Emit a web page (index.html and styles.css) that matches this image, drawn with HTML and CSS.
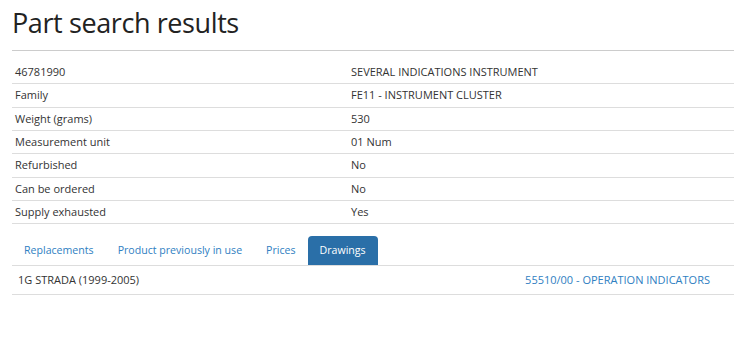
FILE: index.html
```html
<!DOCTYPE html>
<html lang="en">
<head>
  <meta charset="UTF-8">
  <meta name="viewport" content="width=device-width, initial-scale=1.0">
  <title>Part search results</title>
  <link rel="stylesheet" href="styles.css">
</head>
<body>
<div class="page">
  <h1 class="page-title">Part search results</h1>
  <table class="part-table">
    <tr><td class="label">46781990</td><td>SEVERAL INDICATIONS INSTRUMENT</td></tr>
    <tr><td class="label">Family</td><td>FE11 - INSTRUMENT CLUSTER</td></tr>
    <tr><td class="label">Weight (grams)</td><td>530</td></tr>
    <tr><td class="label">Measurement unit</td><td>01 Num</td></tr>
    <tr><td class="label">Refurbished</td><td>No</td></tr>
    <tr><td class="label">Can be ordered</td><td>No</td></tr>
    <tr><td class="label">Supply exhausted</td><td>Yes</td></tr>
  </table>
  <ul class="tabs">
    <li><a href="#">Replacements</a></li>
    <li><a href="#">Product previously in use</a></li>
    <li><a href="#">Prices</a></li>
    <li class="active"><a href="#">Drawings</a></li>
  </ul>
  <table class="drawings-table">
    <tr>
      <td>1G STRADA (1999-2005)</td>
      <td class="drawing-link"><a href="#">55510/00 - OPERATION INDICATORS</a></td>
    </tr>
  </table>
</div>
</body>
</html>
```
FILE: styles.css
```css
body { margin: 0; font-family: "Open Sans", "Noto Sans", sans-serif; font-size: 11px; color: #333; background: #fff; }
.page { padding: 0 0 0 12px; }
.page-title { margin: 0; padding: 5px 0 9px; font-size: 27px; letter-spacing: -0.4px; font-weight: 400; line-height: 36px; color: #222; border-bottom: 1px solid #ccc; }
.part-table { width: 100%; border-collapse: collapse; margin-top: 10px; }
.part-table td { padding: 3px 3px; line-height: 16.33px; border-bottom: 1px solid #ddd; }
.part-table td.label { width: 330px; }
.tabs { list-style: none; margin: 12px 0 0; padding: 0; display: flex; border-bottom: 1px solid #ddd; }
.tabs li a { display: block; padding: 6px 12px; font-size: 10.6px; line-height: 16.5px; color: #2f80c2; text-decoration: none; border-radius: 4px 4px 0 0; }
.tabs li.active a { background: #2a6fa8; color: #fff; }
.drawings-table { width: 100%; border-collapse: collapse; }
.drawings-table td { padding: 6px 6px; line-height: 16px; border-bottom: 1px solid #ddd; }
.drawings-table td.drawing-link { text-align: right; padding-right: 24px; }
.drawings-table a { color: #2f80c2; text-decoration: none; }
```
